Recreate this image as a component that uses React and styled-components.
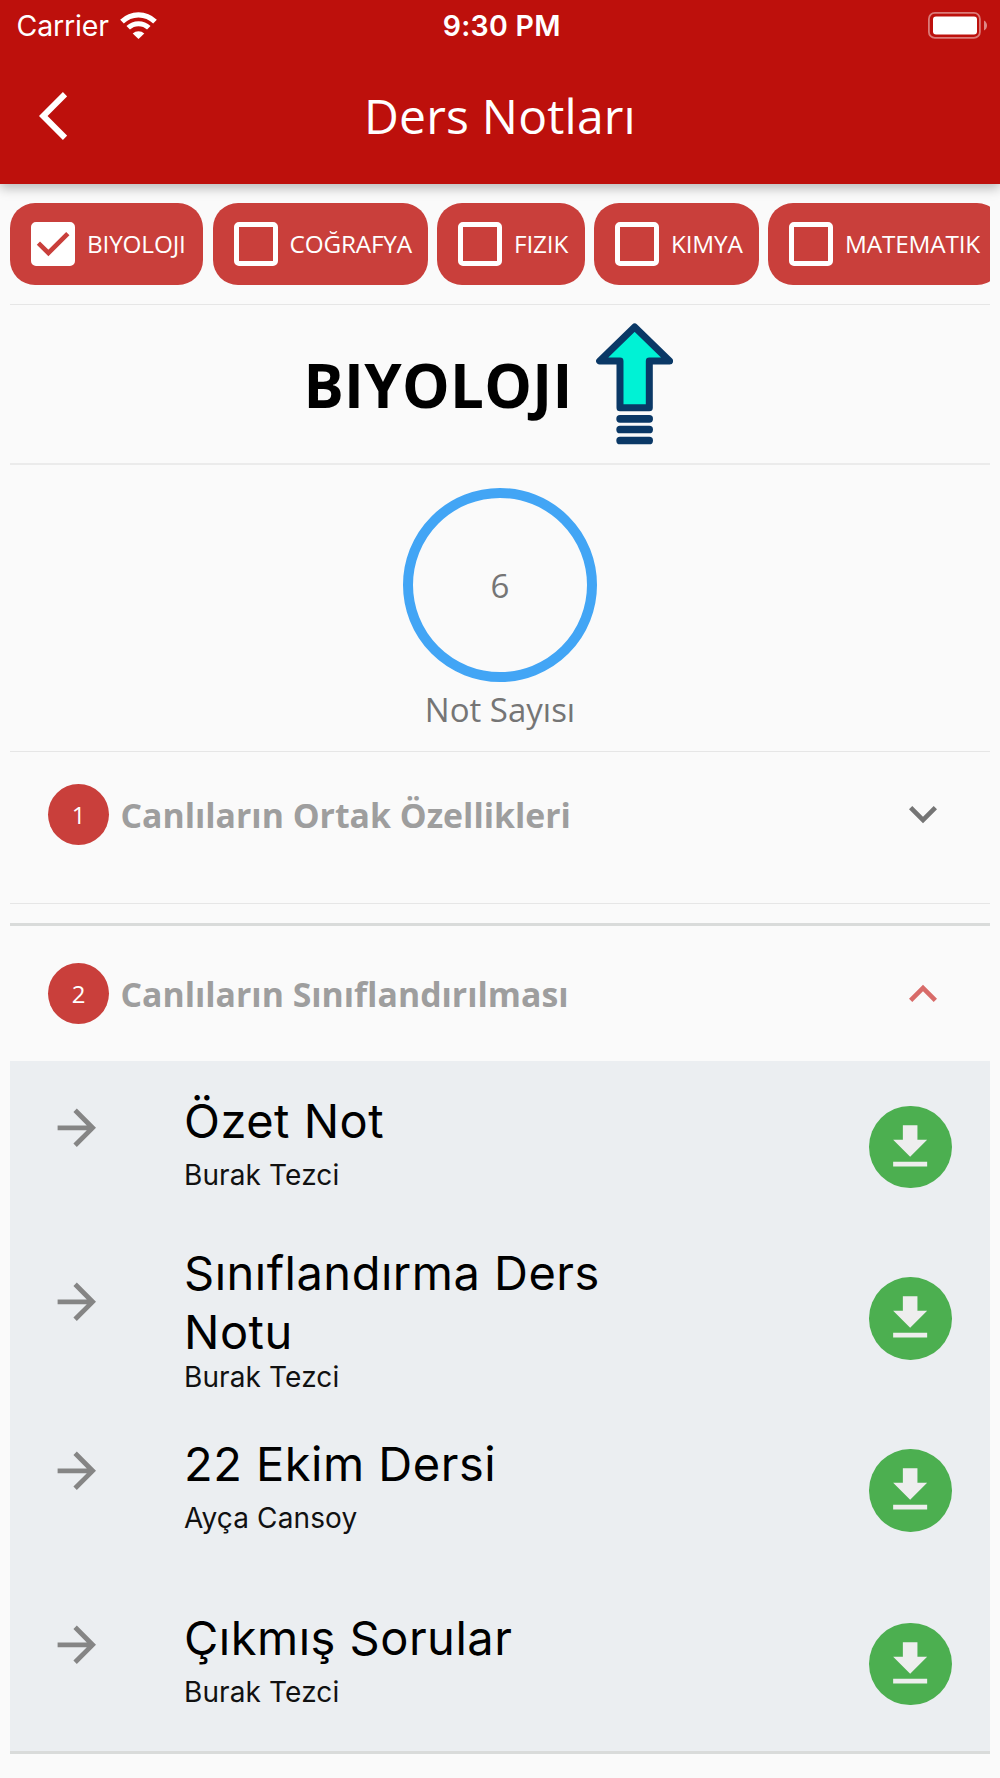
import React, { useState } from "react";
import styled, { createGlobalStyle } from "styled-components";

const colors = {
  header: "#bd100c",
  red: "#c93f3b",
  background: "#fafafa",
  panel: "#ebeef1",
  divider: "#e6e6e6",
  green: "#4caf50",
  blue: "#42a5f5",
};

const GlobalStyle = createGlobalStyle`
  body {
    margin: 0;
    background-color: ${colors.background};
    font-family: "Open Sans", sans-serif;
  }

  * {
    box-sizing: border-box;
  }

  svg {
    display: block;
    flex-shrink: 0;
  }
`;

const Screen = styled.div`
  width: 1000px;
  height: 1778px;
  overflow: hidden;
  background-color: ${colors.background};
`;

const AppBar = styled.header`
  height: 183.5px;
  background-color: ${colors.header};
  color: white;
  box-shadow: 0 4px 11px rgba(0, 0, 0, 0.27);
`;

const StatusBar = styled.div`
  display: grid;
  grid-template-columns: 1fr auto 1fr;
  align-items: center;
  height: 50px;
  padding: 0 13px 0 16.5px;
  font-family: Inter, sans-serif;
  font-size: 28.5px;
`;

const Carrier = styled.div`
  display: flex;
  align-items: center;
  gap: 11px;
  letter-spacing: -0.15px;
`;

const Clock = styled.div`
  font-weight: 600;
  letter-spacing: 0.3px;
`;

const Battery = styled.svg`
  justify-self: end;
`;

const Toolbar = styled.div`
  display: grid;
  grid-template-columns: 120px 1fr 120px;
  align-items: center;
  height: 132px;
`;

const BackButton = styled.div`
  padding-left: 39px;
`;

const Title = styled.div`
  margin-top: -1px;
  text-align: center;
  font-size: 48px;
  letter-spacing: 0.2px;
`;

const Content = styled.main`
  padding: 0 10px;
`;

const ChipRow = styled.div`
  display: flex;
  align-items: center;
  gap: 9.5px;
  height: 120.5px;
  overflow: hidden;
`;

const Chip = styled.div`
  display: flex;
  flex-shrink: 0;
  align-items: center;
  gap: 12px;
  width: ${(props) => props.$width}px;
  height: 82px;
  padding-left: 21px;
  border-radius: 25px;
  background-color: ${colors.red};
  color: white;
  font-size: 24.3px;
  letter-spacing: -0.15px;
`;

const CheckBox = styled.div`
  display: flex;
  align-items: center;
  justify-content: center;
  width: 44px;
  height: 44px;
  border: 5px solid white;
  border-radius: 5px;
  background-color: ${(props) => (props.$checked ? "white" : "transparent")};
`;

const Subject = styled.div`
  display: flex;
  align-items: center;
  justify-content: center;
  height: 161px;
  border-top: 1px solid ${colors.divider};
  border-bottom: 2px solid #ebebeb;
`;

const SubjectName = styled.h1`
  margin: 1px 0 0;
  font-size: 60px;
  font-weight: 700;
  letter-spacing: 0.3px;
`;

const ArrowBox = styled.div`
  display: flex;
  justify-content: center;
  width: 124px;
`;

const Counter = styled.div`
  display: flex;
  flex-direction: column;
  align-items: center;
  height: 287px;
  padding-top: 23px;
  border-bottom: 1px solid ${colors.divider};
  color: #757575;
  font-size: 33px;
`;

const Ring = styled.div`
  display: flex;
  align-items: center;
  justify-content: center;
  width: 194px;
  height: 194px;
  padding-top: 1px;
  border: 10px solid ${colors.blue};
  border-radius: 50%;
`;

const CounterLabel = styled.div`
  margin-top: 5px;
`;

const Section = styled.section`
  margin-top: ${(props) => (props.$open ? "19px" : "0")};
  border-top: ${(props) => (props.$open ? "3px solid #d9dbda" : "none")};
  border-bottom: ${(props) =>
    props.$open ? "3px solid #d9dbda" : `1px solid ${colors.divider}`};
`;

const SectionHeader = styled.div`
  display: flex;
  align-items: center;
  height: ${(props) => (props.$open ? "135px" : "151px")};
  padding: 0 39.5px 0 38px;
  padding-bottom: ${(props) => (props.$open ? "0" : "27px")};
  cursor: pointer;
`;

const Badge = styled.div`
  display: flex;
  align-items: center;
  justify-content: center;
  width: 61px;
  height: 61px;
  border-radius: 50%;
  background-color: ${colors.red};
  color: white;
  font-size: 24px;
`;

const SectionTitle = styled.div`
  flex: 1;
  padding-top: 1px;
  padding-left: 11.5px;
  color: #9e9e9e;
  font-size: 33.8px;
  font-weight: 700;
`;

const Chevron = styled.svg`
  width: 56px;
  height: 56px;
  fill: ${(props) => (props.$open ? "#d86b69" : "#757575")};
  transform: ${(props) => (props.$open ? "rotate(180deg)" : "none")};
`;

const NoteList = styled.div`
  background-color: ${colors.panel};
`;

const Note = styled.div`
  display: grid;
  grid-template-columns: 126px 480px 1fr;
  height: ${(props) => props.$height}px;
  padding: 0 38.5px 0 48px;
`;

const NoteArrow = styled.svg`
  width: 57.6px;
  height: 57.6px;
  margin-left: -9.7px;
  margin-top: ${(props) => props.$top}px;
  fill: #858585;
`;

const NoteText = styled.div`
  padding-top: ${(props) => props.$top}px;
  font-family: Inter, sans-serif;
  color: black;
`;

const NoteTitle = styled.div`
  font-size: 47px;
  line-height: 58.5px;
  letter-spacing: 0.5px;
`;

const NoteAuthor = styled.div`
  margin-top: ${(props) => props.$gap}px;
  font-size: 28px;
  line-height: 34px;
  letter-spacing: 0.12px;
  color: #111;
`;

const Download = styled.div`
  display: flex;
  align-items: center;
  justify-content: center;
  align-self: center;
  justify-self: end;
  width: 82.5px;
  height: 82.5px;
  border-radius: 50%;
  background-color: ${colors.green};
`;

const lessons = [
  { name: "BIYOLOJI", width: 193 },
  { name: "COĞRAFYA", width: 215 },
  { name: "FIZIK", width: 147.5 },
  { name: "KIMYA", width: 164.5 },
  { name: "MATEMATIK", width: 234 },
];

const notes = [
  { title: "Özet Not", author: "Burak Tezci", height: 172, arrowTop: 38, textTop: 31, gap: 7.5 },
  { title: "Sınıflandırma Ders Notu", author: "Burak Tezci", height: 171, arrowTop: 40, textTop: 11, gap: -1 },
  { title: "22 Ekim Dersi", author: "Ayça Cansoy", height: 173, arrowTop: 38, textTop: 31, gap: 7.5 },
  { title: "Çıkmış Sorular", author: "Burak Tezci", height: 174, arrowTop: 39, textTop: 32, gap: 7.5 },
];

const WifiIcon = () => (
  <svg width="37" height="27" viewBox="0 0 37 27" fill="none">
    <path d="M2 9.6a23.5 23.5 0 0 1 33 0" stroke="white" strokeWidth="5.2" />
    <path d="M8.2 15.8a14.8 14.8 0 0 1 20.6 0" stroke="white" strokeWidth="5" />
    <path d="M18.5 27l-5.8-5.6a8.6 8.6 0 0 1 11.6 0z" fill="white" />
  </svg>
);

const CheckIcon = () => (
  <svg width="34" height="34" viewBox="0 0 34 34" fill="none">
    <path d="M2.4 16.2L12.4 26L31.8 6.6" stroke={colors.red} strokeWidth="4.6" />
  </svg>
);

const UpArrowIcon = () => (
  <svg width="77.3" height="122" viewBox="950 70 232 366">
    <path
      d="M1066 82L961 184H1022V324H1110V184H1171Z"
      fill="#00f2d5"
      stroke="#0a3866"
      strokeWidth="21"
      strokeLinejoin="round"
    />
    <g fill="#0a3866">
      <rect x="1011" y="346" width="110" height="23" rx="11" />
      <rect x="1011" y="378" width="110" height="23" rx="11" />
      <rect x="1011" y="411" width="110" height="23" rx="11" />
    </g>
  </svg>
);

const NoteRow = ({ note }) => (
  <Note $height={note.height}>
    <NoteArrow $top={note.arrowTop} viewBox="0 0 24 24">
      <path d="M12 4l-1.41 1.41L16.17 11H4v2h12.17l-5.58 5.59L12 20l8-8z" />
    </NoteArrow>
    <NoteText $top={note.textTop}>
      <NoteTitle>{note.title}</NoteTitle>
      <NoteAuthor $gap={note.gap}>{note.author}</NoteAuthor>
    </NoteText>
    <Download>
      <svg width="58.3" height="58.3" viewBox="0 0 24 24" fill="#eee">
        <path d="M19 9h-4V3H9v6H5l7 7 7-7zM5 18v2h14v-2H5z" />
      </svg>
    </Download>
  </Note>
);

const NoteSection = ({ number, title, open, onToggle, children }) => (
  <Section $open={open}>
    <SectionHeader $open={open} onClick={onToggle}>
      <Badge>{number}</Badge>
      <SectionTitle>{title}</SectionTitle>
      <Chevron $open={open} viewBox="0 0 24 24">
        <path d="M16.59 8.59L12 13.17 7.41 8.59 6 10l6 6 6-6z" />
      </Chevron>
    </SectionHeader>
    {open && <NoteList>{children}</NoteList>}
  </Section>
);

const App = () => {
  const [selected, setSelected] = useState("BIYOLOJI");
  const [openSection, setOpenSection] = useState(2);

  const toggle = (number) =>
    setOpenSection(openSection === number ? null : number);

  return (
    <Screen>
      <GlobalStyle />
      <AppBar>
        <StatusBar>
          <Carrier>
            Carrier <WifiIcon />
          </Carrier>
          <Clock>9:30 PM</Clock>
          <Battery width="59" height="27" viewBox="0 0 59 27">
            <rect x="0.9" y="0.9" width="51" height="25" rx="6" fill="none" stroke="white" strokeOpacity="0.45" strokeWidth="1.8" />
            <rect x="5" y="4.5" width="44" height="18" rx="3" fill="white" />
            <path d="M56 8.5c4 2 4 8 0 10z" fill="white" fillOpacity="0.5" />
          </Battery>
        </StatusBar>
        <Toolbar>
          <BackButton>
            <svg width="28.2" height="48" viewBox="0 2.1 11.67 19.8" fill="white">
              <path d="M11.67 3.87L9.9 2.1 0 12l9.9 9.9 1.77-1.77L3.54 12z" />
            </svg>
          </BackButton>
          <Title>Ders Notları</Title>
        </Toolbar>
      </AppBar>
      <Content>
        <ChipRow>
          {lessons.map(({ name, width }) => (
            <Chip key={name} $width={width} onClick={() => setSelected(name)}>
              <CheckBox $checked={selected === name}>
                {selected === name && <CheckIcon />}
              </CheckBox>
              {name}
            </Chip>
          ))}
        </ChipRow>
        <Subject>
          <SubjectName>{selected}</SubjectName>
          <ArrowBox>
            <UpArrowIcon />
          </ArrowBox>
        </Subject>
        <Counter>
          <Ring>6</Ring>
          <CounterLabel>Not Sayısı</CounterLabel>
        </Counter>
        <NoteSection
          number={1}
          title="Canlıların Ortak Özellikleri"
          open={openSection === 1}
          onToggle={() => toggle(1)}
        />
        <NoteSection
          number={2}
          title="Canlıların Sınıflandırılması"
          open={openSection === 2}
          onToggle={() => toggle(2)}
        >
          {notes.map((note) => (
            <NoteRow key={note.title} note={note} />
          ))}
        </NoteSection>
      </Content>
    </Screen>
  );
};

export default App;
